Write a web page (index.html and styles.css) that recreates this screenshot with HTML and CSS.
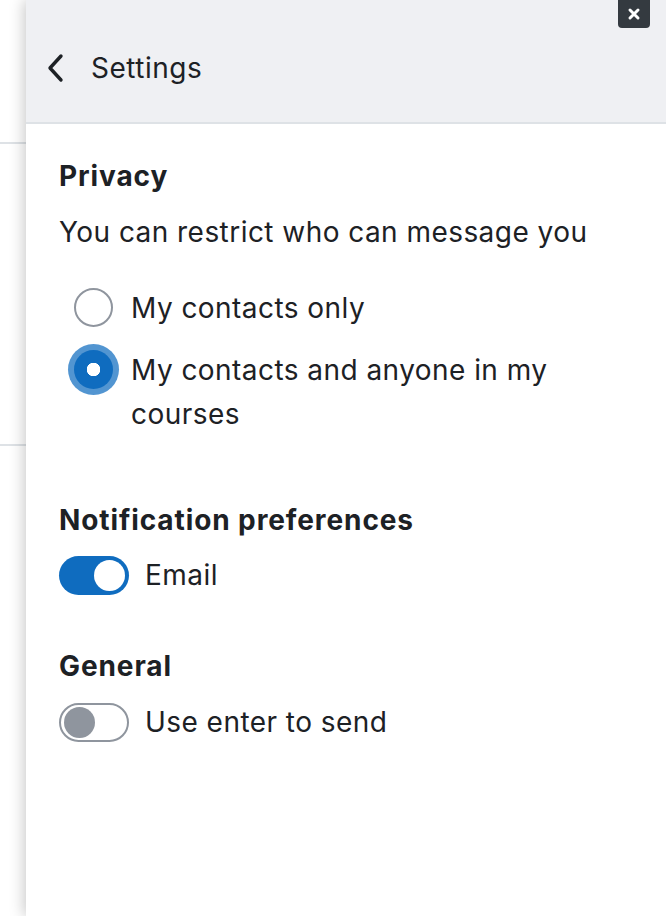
FILE: index.html
```html
<!DOCTYPE html>
<html>
<head>
<meta charset="utf-8">
<link rel="stylesheet" href="styles.css">
</head>
<body>
<div class="page">
  <div class="behind">
    <div class="behind-row first"></div>
    <div class="behind-row second"></div>
  </div>
  <aside class="drawer">
    <button class="close" aria-label="Close">
      <svg width="14" height="14" viewBox="0 0 14 14"><path d="M3 3 L11 11 M11 3 L3 11" stroke="#fff" stroke-width="3" stroke-linecap="round"/></svg>
    </button>
    <header class="drawer-head">
      <svg class="back" width="20" height="30" viewBox="0 0 20 30"><path d="M15 3 L4 15 L15 27" fill="none" stroke="#1d2125" stroke-width="3.4" stroke-linecap="round" stroke-linejoin="round"/></svg>
      <span class="title">Settings</span>
    </header>
    <div class="drawer-body">
      <section class="group privacy">
        <h3 class="heading">Privacy</h3>
        <p class="desc">You can restrict who can message you</p>
        <div class="radios">
          <label class="radio-row">
            <span class="radio"></span>
            <span class="radio-label">My contacts only</span>
          </label>
          <label class="radio-row">
            <span class="radio checked"></span>
            <span class="radio-label">My contacts and anyone in my courses</span>
          </label>
        </div>
      </section>
      <section class="group notif">
        <h3 class="heading">Notification preferences</h3>
        <div class="toggle-row">
          <span class="switch on"><span class="knob"></span></span>
          <span class="toggle-label">Email</span>
        </div>
      </section>
      <section class="group general">
        <h3 class="heading">General</h3>
        <div class="toggle-row">
          <span class="switch off"><span class="knob"></span></span>
          <span class="toggle-label">Use enter to send</span>
        </div>
      </section>
    </div>
  </aside>
</div>
</body>
</html>
```
FILE: styles.css
```css
* { box-sizing: border-box; }
html, body { margin: 0; padding: 0; background: #fff; }
body {
  font-family: Inter, "Noto Sans", "Liberation Sans", sans-serif;
  color: #1d2125;
  width: 666px;
  height: 916px;
  overflow: hidden;
  font-size: 28px;
  letter-spacing: 0.45px;
}
.page {
  display: flex;
  height: 916px;
}
.behind {
  width: 26px;
  flex: none;
}
.behind-row {
  border-bottom: 2px solid #dee2e6;
}
.behind-row.first { height: 144px; }
.behind-row.second { height: 302px; }

.drawer {
  position: relative;
  flex: 1;
  background: #fff;
  box-shadow: -2px 0 14px rgba(0,0,0,0.22);
  display: flex;
  flex-direction: column;
}
.close {
  position: absolute;
  top: 0;
  right: 16px;
  width: 32px;
  height: 28px;
  border: 0;
  border-radius: 0 0 4px 4px;
  background: #343a40;
  display: flex;
  align-items: center;
  justify-content: center;
  padding: 0;
}
.drawer-head {
  height: 124px;
  background: #eff0f3;
  border-bottom: 2px solid #dee2e6;
  display: flex;
  align-items: center;
  padding: 14px 0 0 20px;
  gap: 25px;
}
.back { display: block; }
.title {
  font-size: 28px;
  line-height: 40px;
  letter-spacing: 0.5px;
}
.drawer-body {
  padding: 32px 40px 0 33px;
}
.heading {
  margin: 0;
  font-size: 28px;
  font-weight: 700;
  line-height: 40px;
  letter-spacing: 0.9px;
}
.desc {
  margin: 16px 0 0;
  line-height: 40px;
}
.radios {
  margin-top: 34px;
  display: flex;
  flex-direction: column;
  gap: 18px;
  padding-left: 15px;
}
.radio-row {
  display: flex;
  align-items: flex-start;
  gap: 18px;
}
.radio {
  flex: none;
  width: 39px;
  height: 39px;
  margin-top: 2px;
  border-radius: 50%;
  border: 2px solid #8f959e;
  background: #fff;
}
.radio.checked {
  border: 0;
  background: #0f6cbf radial-gradient(circle, #fff 0 6.5px, transparent 7px);
  box-shadow: 0 0 0 6px rgba(15,108,191,0.72);
}
.radio-label {
  line-height: 44px;
}
.notif { margin-top: 64px; }
.general { margin-top: 51px; }
.toggle-row {
  display: flex;
  align-items: center;
  gap: 16px;
}
.notif .toggle-row { margin-top: 15px; }
.general .toggle-row { margin-top: 16px; }
.switch {
  flex: none;
  width: 70px;
  height: 39px;
  border-radius: 20px;
  display: flex;
  align-items: center;
  padding: 0 3px;
}
.switch .knob {
  width: 31px;
  height: 31px;
  border-radius: 50%;
}
.switch.on {
  background: #0f6cbf;
  justify-content: flex-end;
  padding-right: 4px;
}
.switch.on .knob { background: #fff; }
.switch.off {
  background: #fff;
  border: 2px solid #8f959e;
  padding-left: 3px;
}
.switch.off .knob { background: #8f959e; }
.toggle-label {
  line-height: 40px;
}
```
